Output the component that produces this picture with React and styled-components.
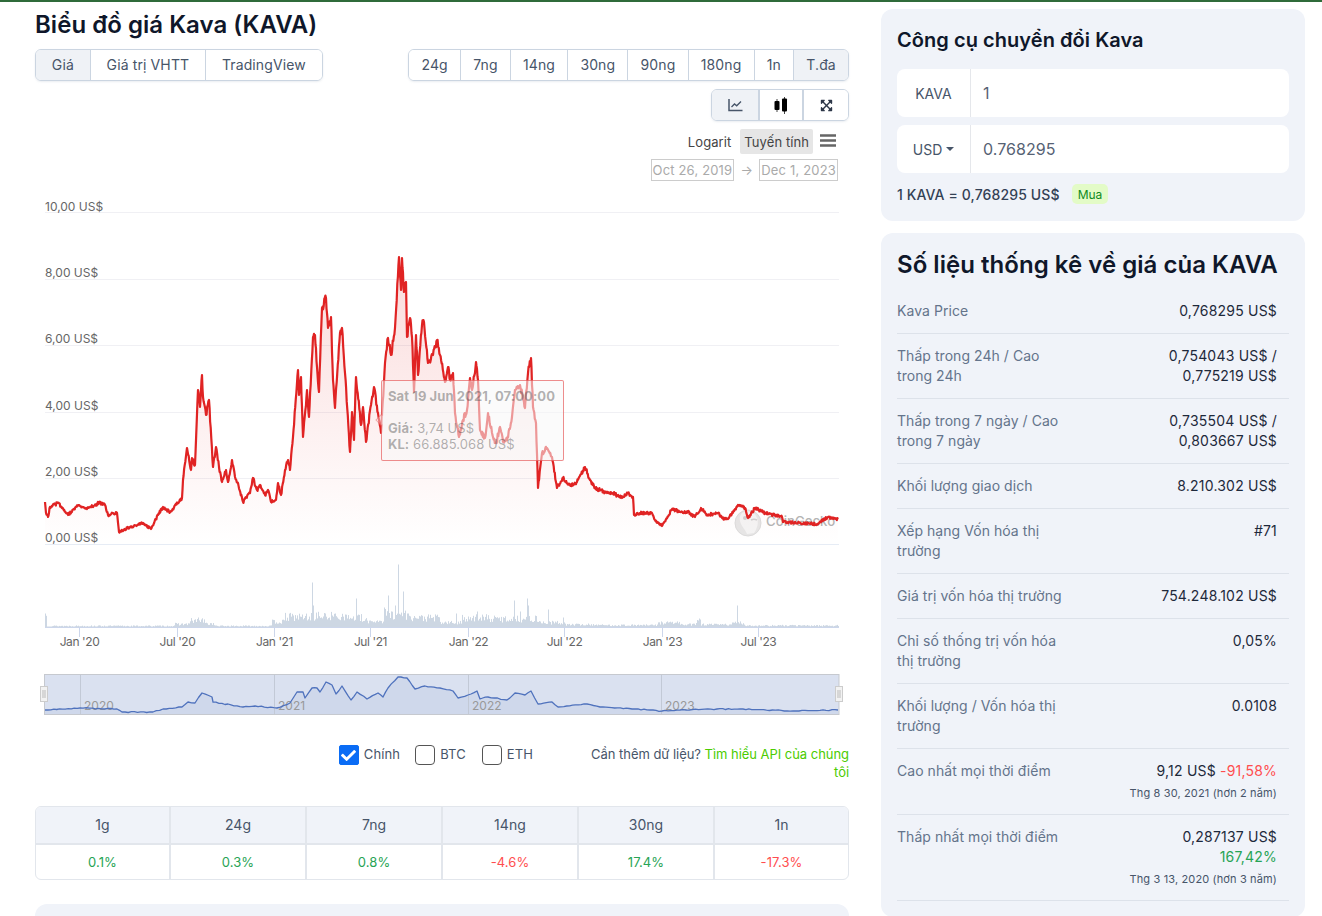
import React from 'react';
import styled, { createGlobalStyle } from 'styled-components';
import { FaExpandArrowsAlt, FaCheck } from 'react-icons/fa';

const GlobalStyle = createGlobalStyle`
  html, body { margin: 0; padding: 0; height: 916px; overflow: hidden; background: #fff; }
  body { font-family: Inter, "Noto Sans", "Liberation Sans", sans-serif; color: #1e293b; letter-spacing: 0.05px; }
  * { box-sizing: border-box; }
`;

const priceKeys = [
  [45,502],[46,513],[48,517],[50,507],[58,503],[68,515],[78,505],[87,509],[99,503],[105,505],[108,515],[117,513],[119,532],[130,527],[143,523],[151,529],[158,515],[163,507],[170,512],[182,498],[183,480],
  [187,448],[191,470],[192,458],[195,465],[198,390],[200,407],[202,375],[203,397],[206,415],[209,400],[213,467],[216,447],[219,467],[222,482],[226,470],[228,482],[232,460],[235,477],[238,483],[243,502],[250,493],[253,478],[257,490],[260,485],[265,495],[268,490],[271,502],[276,500],[278,483],[281,495],[285,470],[288,460],[290,470],[293,437],[298,370],[299,395],[301,377],[303,437],[307,390],[309,417],[313,337],[315,335],[317,367],[319,392],[322,308],[326,298],[328,328],[331,317],[333,380],[335,408],[340,333],[342,328],[345,373],[350,452],[352,412],[354,440],[356,377],[361,425],[363,407],[366,442],[371,405],[374,387],[378,413],
  [381,433],[385,363],[388,338],[391,355],[395,328],[399,257],[401,290],[402,258],[404,292],[406,282],[407,337],[410,318],[412,337],[414,392],[416,335],[418,375],[422,325],[424,322],[428,363],[433,355],[437,340],[440,355],[445,382],[448,367],[450,380],[453,373],[455,413],[459,437],[463,420],[467,410],[470,378],[472,390],[476,362],[478,380],[480,430],[485,438],[488,413],[493,437],[496,443],[500,427],[503,442],[507,440],[512,417],[515,390],[520,385],[525,408],[528,373],[531,358],[533,407],[536,423],[538,488],[542,453],[547,448],[552,457],[557,488],[563,478],[570,485],[577,482],[585,467],[590,480],
  [595,488],[607,493],[613,493],[622,498],[628,493],[633,497],[634,515],[640,513],[652,513],[655,520],[662,526],[672,509],[683,513],[688,512],[695,517],[701,508],[707,515],[718,513],[722,518],[728,519],[738,505],[745,508],[748,518],[755,508],[765,513],[782,517],[783,522],[800,523],[817,524],[828,517],[838,519]
];

const navKeys = [
  [45,710],[80,708],[117,709],[122,712],[153,712],[163,709],[182,707],[188,702],[195,703],[202,693],[212,697],[213,702],[243,707],[255,706],[277,708],[290,703],[297,692],[303,692],[305,698],[312,688],[317,688],[320,692],[326,682],[332,685],[336,694],[342,686],[351,700],[357,692],[367,699],[378,693],[383,697],[388,688],[398,677],[407,678],[415,689],[425,686],[440,688],[453,691],[458,698],[468,695],[477,691],[480,699],[488,697],[507,700],[515,693],[525,695],[531,691],[538,704],[552,702],[558,707],[587,704],[600,707],[635,709],[662,711],[680,710],[717,709],[740,709],[793,711],[838,710]
];

const volumeBands = [
  [45,47,14],[47,175,1.6],[175,190,3.5],[190,205,7],[205,215,4],[215,272,1.6],[272,285,6],[285,312,11],[312,345,12],[345,362,10],[362,384,7],[384,412,14],[412,440,10],[440,462,5],[462,490,10],[490,540,9],[540,565,5],[565,600,3],[600,658,2.4],[658,680,5],[680,696,3],[696,701,7],[701,730,3],[730,745,4.5],[745,839,2]
];
const volumeSpikes = [
  [312,45],[313,22],[398,63],[388,32],[356,29],[403,36],[395,22],[384,20],[514,27],[527,29],[528,22],[737,22],[548,18],[520,16],[477,16],[468,11],[563,10],[698,7],[293,12],[325,14],[332,12],[198,10],[408,14],[456,14],[480,10],[345,13]
];

function seeded(seed) {
  let a = seed;
  return () => {
    a = (a + 0x6d2b79f5) | 0;
    let t = Math.imul(a ^ (a >>> 15), 1 | a);
    t = (t + Math.imul(t ^ (t >>> 7), 61 | t)) ^ t;
    return ((t ^ (t >>> 14)) >>> 0) / 4294967296;
  };
}

function buildLine(keys, seed, stepSize, ampOf) {
  const rnd = seeded(seed);
  let d = '';
  keys.forEach(([x, y], i) => {
    if (i === 0) { d += `M${x} ${y}`; return; }
    const [px, py] = keys[i - 1];
    const steps = Math.max(1, Math.round((x - px) / stepSize));
    for (let s = 1; s <= steps; s++) {
      const t = s / steps;
      const yy = py + (y - py) * t;
      const amp = s === steps ? 0 : ampOf(yy);
      d += `L${(px + (x - px) * t).toFixed(1)} ${(yy + (rnd() - 0.5) * 2 * amp).toFixed(1)}`;
    }
  });
  return d;
}

function buildVolume() {
  const rnd = seeded(13);
  let d = '';
  for (let x = 45; x < 839; x++) {
    const band = volumeBands.find(b => x >= b[0] && x < b[1]);
    const base = band ? band[2] : 2;
    let h = base * (0.55 + rnd() * 0.8);
    const spike = volumeSpikes.find(s => s[0] === x);
    if (spike) h = spike[1];
    d += `M${x + 0.5} 627.5V${(627.5 - Math.max(1, h)).toFixed(1)}`;
  }
  return d;
}

const pricePath = buildLine(priceKeys, 77, 0.55, y => Math.min(5, 1 + (544 - y) / 70));
const volumePath = buildVolume();
const navPath = buildLine(navKeys, 5, 3, () => 0.5);

const Page = styled.div`
  width: 1322px;
  height: 916px;
  overflow: hidden;
  border-top: 2px solid #2f6b3a;
  display: flex;
  align-items: flex-start;
  gap: 32px;
  padding: 0 17px 0 35px;
`;
const LeftColumn = styled.main`
  width: 814px;
  flex: none;
`;
const RightColumn = styled.aside`
  width: 424px;
  flex: none;
  padding-top: 7px;
  display: flex;
  flex-direction: column;
  gap: 12px;
`;
const Title = styled.h1`
  margin: 7px 0 0;
  font-size: 24px;
  line-height: 32px;
  font-weight: 600;
  letter-spacing: 0.03px;
  color: #0f172a;
`;
const Toolbar = styled.div`
  margin-top: 8px;
  display: flex;
  justify-content: space-between;
`;
const ButtonGroup = styled.div`
  display: flex;
  height: 32px;
  border: 1px solid #cbd5e1;
  border-radius: 6px;
  overflow: hidden;
  box-shadow: 0 1px 2px rgba(148, 163, 184, 0.2);
`;
const GroupButton = styled.div`
  display: flex;
  align-items: center;
  justify-content: center;
  padding: 0 ${p => p.$pad}px 1px;
  font-size: 14px;
  letter-spacing: 0.12px;
  color: #475569;
  background: ${p => (p.$active ? '#eff2f6' : '#fff')};
  & + & { border-left: 1px solid #cbd5e1; }
`;
const IconRow = styled.div`
  margin-top: 8px;
  display: flex;
  justify-content: flex-end;
`;
const IconButton = styled.div`
  width: ${p => p.$w}px;
  display: flex;
  align-items: center;
  justify-content: center;
  background: ${p => (p.$active ? '#eff2f6' : '#fff')};
  color: ${p => p.$color || '#475569'};
  & + & { border-left: 2px solid #cbd5e1; }
`;
const ScaleRow = styled.div`
  margin-top: 8px;
  height: 25px;
  padding-right: 13px;
  display: flex;
  justify-content: flex-end;
  align-items: center;
  font-size: 13px;
  letter-spacing: 0.08px;
  color: #444;
`;
const ScaleOption = styled.span`
  height: 25px;
  display: flex;
  align-items: center;
  padding: 0 4px;
  margin-left: 5px;
  background: ${p => (p.$active ? '#e6e6e6' : 'transparent')};
  border-radius: 2px;
`;
const MenuIcon = styled.svg`
  margin-left: 7px;
  margin-bottom: 3px;
`;
const DateRow = styled.div`
  margin-top: 5px;
  height: 22px;
  padding-right: 11px;
  display: flex;
  justify-content: flex-end;
  align-items: center;
  font-size: 13px;
  letter-spacing: 0.17px;
  color: #aaa;
`;
const DateBox = styled.span`
  height: 22px;
  display: flex;
  align-items: center;
  padding: 0 1px;
  border: 1px solid #ccc;
`;
const DateArrow = styled.span`
  width: 25px;
  text-align: center;
  font-size: 13px;
  color: #aaa;
`;
const ChartWrap = styled.div`
  position: relative;
  margin-top: 9px;
  height: 540px;
`;
const ChartSvg = styled.svg`
  display: block;
`;
const AxisText = styled.text`
  font-family: Inter, sans-serif;
  font-size: 12px;
  letter-spacing: ${p => (p.$tight ? '-0.4px' : '0')};
  fill: #666;
`;
const NavYear = styled.text`
  font-family: Inter, sans-serif;
  font-size: 12px;
  letter-spacing: 0;
  fill: #999;
`;
const Watermark = styled.text`
  font-family: Inter, sans-serif;
  font-size: 13.2px;
  font-weight: 500;
  letter-spacing: 0;
  fill: #b4b4b4;
`;
const Tooltip = styled.div`
  position: absolute;
  left: 346px;
  top: 190px;
  width: 183px;
  height: 81px;
  padding: 7px 6px;
  background: rgba(247, 247, 247, 0.55);
  border: 1px solid rgba(224, 32, 32, 0.5);
  border-radius: 2px;
  font-size: 13px;
  line-height: 16px;
  letter-spacing: 0.08px;
  color: rgba(70, 70, 70, 0.42);
`;
const TooltipPointer = styled.span`
  position: absolute;
  left: -5px;
  top: 35px;
  width: 8px;
  height: 8px;
  transform: rotate(45deg);
  border-left: 1px solid rgba(224, 32, 32, 0.35);
  border-bottom: 1px solid rgba(224, 32, 32, 0.35);
  background: rgba(247, 247, 247, 0.4);
`;
const TooltipHead = styled.div`
  font-weight: 700;
  margin-bottom: 16px;
`;
const TooltipLine = styled.div`
  white-space: nowrap;
  & b { font-weight: 700; }
`;
const LegendRow = styled.div`
  margin-top: 15px;
  height: 43px;
  display: flex;
  justify-content: flex-end;
  align-items: flex-start;
  font-size: 13px;
  color: #475569;
`;
const CheckGroup = styled.div`
  display: flex;
  align-items: center;
  gap: 5px;
  margin-right: ${p => p.$mr || 15}px;
  height: 20px;
`;
const CheckText = styled.span`
  padding-bottom: 2px;
  letter-spacing: 0.12px;
`;
const CheckBox = styled.span`
  width: 20px;
  height: 20px;
  display: flex;
  align-items: center;
  justify-content: center;
  border-radius: ${p => (p.$on ? '2px' : '4px')};
  background: ${p => (p.$on ? '#0a6cf5' : '#fff')};
  border: 1px solid ${p => (p.$on ? '#0a6cf5' : '#555')};
  color: #fff;
`;
const ApiNote = styled.div`
  width: 260px;
  margin-left: 41px;
  text-align: right;
  line-height: 18px;
  letter-spacing: -0.04px;
  color: #475569;
`;
const ApiLink = styled.span`
  color: #4bcc00;
`;
const ChangeTable = styled.div`
  margin-top: 18px;
  display: grid;
  grid-template-columns: 135px repeat(4, 136px) 1fr;
  border: 1px solid #e2e6ec;
  border-radius: 6px;
  overflow: hidden;
`;
const ChangeHead = styled.div`
  height: 38px;
  padding-bottom: 1px;
  display: flex;
  align-items: center;
  justify-content: center;
  background: #f0f3f9;
  border-bottom: 2px solid #e2e6ec;
  border-right: ${p => (p.$last ? '0' : '2px solid #e2e6ec')};
  font-size: 14px;
  color: #475569;
`;
const ChangeCell = styled.div`
  height: 34px;
  padding-bottom: 1px;
  display: flex;
  align-items: center;
  justify-content: center;
  border-right: ${p => (p.$last ? '0' : '2px solid #e2e6ec')};
  font-size: 13px;
  letter-spacing: 0.1px;
  color: ${p => (p.$up ? '#27a455' : '#ff4d4f')};
`;
const BottomCard = styled.div`
  margin-top: 24px;
  height: 60px;
  background: #f0f3f9;
  border-radius: 12px;
`;
const SideCard = styled.section`
  background: #f0f3f9;
  border-radius: 12px;
  padding: 16px;
`;
const ConverterTitle = styled.h2`
  margin: 1px 0 0;
  font-size: 20px;
  line-height: 28px;
  font-weight: 600;
  letter-spacing: 0.05px;
  color: #0f172a;
`;
const ConvertRow = styled.div`
  margin-top: ${p => p.$mt}px;
  height: 48px;
  display: flex;
  background: #fff;
  border-radius: 8px;
`;
const ConvertUnit = styled.div`
  width: 74px;
  flex: none;
  display: flex;
  align-items: center;
  justify-content: center;
  gap: 4px;
  font-size: 14px;
  color: #475569;
  border-right: 1px solid #e5e7eb;
`;
const Caret = styled.span`
  width: 0;
  height: 0;
  border-left: 4px solid transparent;
  border-right: 4px solid transparent;
  border-top: 4px solid #475569;
`;
const ConvertValue = styled.div`
  display: flex;
  align-items: center;
  padding-left: 12px;
  font-size: 16px;
  color: #566274;
`;
const RateLine = styled.div`
  margin: 11px 0 1px;
  height: 20px;
  display: flex;
  align-items: center;
  font-size: 14px;
  font-weight: 500;
  letter-spacing: 0.12px;
  color: #334155;
`;
const BuyBadge = styled.span`
  margin-left: 12px;
  height: 20px;
  padding: 0 6px;
  display: flex;
  align-items: center;
  background: #e3fbc7;
  border-radius: 5px;
  font-size: 12px;
  font-weight: 400;
  letter-spacing: 0;
  color: #0f8a1f;
`;
const StatsTitle = styled.h2`
  margin: 0 0 8px;
  font-size: 24px;
  line-height: 32px;
  font-weight: 600;
  letter-spacing: 0.03px;
  color: #0f172a;
`;
const StatRow = styled.div`
  display: grid;
  grid-template-columns: 196px 196px;
  padding: 12px 0;
  border-bottom: 1px solid #dde2ea;
  font-size: 14px;
  line-height: 20px;
`;
const StatLabel = styled.div`
  color: #64748b;
  padding-right: 24px;
`;
const StatValue = styled.div`
  padding: 0 12px 0 24px;
  text-align: right;
  letter-spacing: 0.2px;
  color: #1e293b;
`;
const Pct = styled.span`
  color: ${p => (p.$up ? '#27a455' : '#ff4d4f')};
`;
const StatSub = styled.div`
  margin: 3px -4px 0 -20px;
  font-size: 11px;
  line-height: 18px;
  letter-spacing: 0.14px;
  color: #475569;
  padding-right: 4px;
`;

const yLabels = [['10,00 US$', 211], ['8,00 US$', 277], ['6,00 US$', 343], ['4,00 US$', 410], ['2,00 US$', 476], ['0,00 US$', 542]];
const gridY = [212.5, 279.5, 345.5, 412.5, 478.5];
const xLabels = [["Jan '20", 79], ["Jul '20", 177], ["Jan '21", 274], ["Jul '21", 370], ["Jan '22", 468], ["Jul '22", 564], ["Jan '23", 662], ["Jul '23", 758]];
const navYears = [['2020', 80], ['2021', 274], ['2022', 468], ['2023', 661]];
const tabs = [['Giá', true], ['Giá trị VHTT', false], ['TradingView', false]];
const ranges = ['24g', '7ng', '14ng', '30ng', '90ng', '180ng', '1n', 'T.đa'];
const changes = [['1g', '0.1%', true], ['24g', '0.3%', true], ['7ng', '0.8%', true], ['14ng', '-4.6%', false], ['30ng', '17.4%', true], ['1n', '-17.3%', false]];
const stats = [
  ['Kava Price', '0,768295 US$'],
  ['Thấp trong 24h / Cao trong 24h', '0,754043 US$ / 0,775219 US$'],
  ['Thấp trong 7 ngày / Cao trong 7 ngày', '0,735504 US$ / 0,803667 US$'],
  ['Khối lượng giao dịch', '8.210.302 US$'],
  ['Xếp hạng Vốn hóa thị trường', '#71'],
  ['Giá trị vốn hóa thị trường', '754.248.102 US$'],
  ['Chỉ số thống trị vốn hóa thị trường', '0,05%'],
  ['Khối lượng / Vốn hóa thị trường', '0.0108'],
];

function LineIcon() {
  return (
    <svg width="15" height="14" viewBox="0 0 15 14" fill="none" stroke="currentColor">
      <path d="M1 1v11.5h13.5" strokeWidth="1.5" />
      <path d="M3.5 9l3-3 2.2 1.8 4.3-4.3" strokeWidth="1.3" />
    </svg>
  );
}

function CandleIcon() {
  return (
    <svg width="14" height="17" viewBox="0 0 14 17">
      <path d="M3 2v13M10.5 0v17" stroke="#444" strokeWidth="1" />
      <rect x="0.5" y="4" width="5" height="9" rx="1" fill="#000" />
      <rect x="8" y="1.5" width="5" height="13" rx="1" fill="#000" />
    </svg>
  );
}

function GeckoMark() {
  return (
    <g>
      <circle cx="748" cy="523" r="13" fill="#e6e6e6" stroke="#dcdcdc" strokeWidth="1" />
      <path d="M742 513c6-3 13-1 15 5 2 5 0 11-3 15l-7 1c-2-5-6-8-7-13-1-3 0-6 2-8z" fill="#f4f4f4" />
      <circle cx="745" cy="518" r="2" fill="#cfcfcf" />
      <path d="M751 520c2-1 4-1 6 0" stroke="#d0d0d0" strokeWidth="1.5" fill="none" />
    </g>
  );
}

function PriceChart() {
  return (
    <ChartSvg width="814" height="540" viewBox="35 190 814 540">
      <defs>
        <linearGradient id="priceFill" gradientUnits="userSpaceOnUse" x1="0" y1="257" x2="0" y2="544">
          <stop offset="0" stopColor="#e02020" stopOpacity="0.16" />
          <stop offset="1" stopColor="#e02020" stopOpacity="0" />
        </linearGradient>
      </defs>
      {gridY.map(y => <line key={y} x1="45" x2="839" y1={y} y2={y} stroke="#f0f0f4" />)}
      <line x1="45" x2="839" y1="544.5" y2="544.5" stroke="#e6ecf5" />
      {yLabels.map(([t, y]) => <AxisText key={t} x="45" y={y}>{t}</AxisText>)}
      <GeckoMark />
      <Watermark x="766" y="526">CoinGecko</Watermark>
      <path d={`${pricePath}L838 544L45 544Z`} fill="url(#priceFill)" />
      <path d={pricePath} fill="none" stroke="#e02323" strokeWidth="2.2" strokeLinejoin="round" />
      <path d={volumePath} stroke="#cdd7e3" strokeWidth="1" fill="none" />
      <line x1="45" x2="839" y1="627.5" y2="627.5" stroke="#ccd6eb" />
      {xLabels.map(([t, x]) => (
        <g key={t}>
          <line x1={x + 0.5} x2={x + 0.5} y1="628" y2="637" stroke="#ccd6eb" />
          <AxisText $tight x={x + 0.5} y="646" textAnchor="middle">{t}</AxisText>
        </g>
      ))}
      <rect x="44.5" y="674.5" width="794.5" height="40" fill="#dae1f0" />
      <path d={`${navPath}L838 714L45 714Z`} fill="#cfd8eb" />
      {navYears.map(([t, x]) => (
        <g key={t}>
          <line x1={x + 0.5} x2={x + 0.5} y1="675" y2="714" stroke="#c2c9d6" />
          <NavYear x={x + 4} y="710">{t}</NavYear>
        </g>
      ))}
      <path d={navPath} fill="none" stroke="#4f72bd" strokeWidth="1.3" strokeLinejoin="round" />
      <rect x="44.5" y="674.5" width="794.5" height="40" fill="none" stroke="#c6c9cf" />
      {[40.5, 835.5].map(x => (
        <g key={x}>
          <rect x={x} y="686.5" width="7" height="15" fill="#f2f2f2" stroke="#ccc" />
          <path d={`M${x + 2.5} 690v8M${x + 4.5} 690v8`} stroke="#bbb" strokeWidth="1" />
        </g>
      ))}
    </ChartSvg>
  );
}

export default function App() {
  return (
    <>
      <GlobalStyle />
      <Page>
        <LeftColumn>
          <Title>Biểu đồ giá Kava (KAVA)</Title>
          <Toolbar>
            <ButtonGroup>
              {tabs.map(([t, on]) => <GroupButton key={t} $pad={15.85} $active={on}>{t}</GroupButton>)}
            </ButtonGroup>
            <ButtonGroup>
              {ranges.map(t => <GroupButton key={t} $pad={12.18} $active={t === 'T.đa'}>{t}</GroupButton>)}
            </ButtonGroup>
          </Toolbar>
          <IconRow>
            <ButtonGroup>
              <IconButton $w={46} $active><LineIcon /></IconButton>
              <IconButton $w={44}><CandleIcon /></IconButton>
              <IconButton $w={46} $color="#2d3748"><FaExpandArrowsAlt size={13} /></IconButton>
            </ButtonGroup>
          </IconRow>
          <ScaleRow>
            <ScaleOption>Logarit</ScaleOption>
            <ScaleOption $active>Tuyến tính</ScaleOption>
            <MenuIcon width="16" height="13" viewBox="0 0 16 13">
              <path d="M0 1.5h16M0 6.5h16M0 11.5h16" stroke="#666" strokeWidth="2.6" />
            </MenuIcon>
          </ScaleRow>
          <DateRow>
            <DateBox>Oct 26, 2019</DateBox>
            <DateArrow>→</DateArrow>
            <DateBox>Dec 1, 2023</DateBox>
          </DateRow>
          <ChartWrap>
            <PriceChart />
            <Tooltip>
              <TooltipPointer />
              <TooltipHead>Sat 19 Jun 2021, 07:00:00</TooltipHead>
              <TooltipLine><b>Giá:</b> 3,74 US$</TooltipLine>
              <TooltipLine><b>KL:</b> 66.885.068 US$</TooltipLine>
            </Tooltip>
          </ChartWrap>
          <LegendRow>
            <CheckGroup><CheckBox $on><FaCheck size={15} /></CheckBox><CheckText>Chính</CheckText></CheckGroup>
            <CheckGroup $mr={16}><CheckBox /><CheckText>BTC</CheckText></CheckGroup>
            <CheckGroup><CheckBox /><CheckText>ETH</CheckText></CheckGroup>
            <ApiNote>Cần thêm dữ liệu? <ApiLink>Tìm hiểu API của chúng tôi</ApiLink></ApiNote>
          </LegendRow>
          <ChangeTable>
            {changes.map(([h], i) => <ChangeHead key={h} $last={i === 5}>{h}</ChangeHead>)}
            {changes.map(([h, v, up], i) => <ChangeCell key={h} $last={i === 5} $up={up}>{v}</ChangeCell>)}
          </ChangeTable>
          <BottomCard />
        </LeftColumn>
        <RightColumn>
          <SideCard>
            <ConverterTitle>Công cụ chuyển đổi Kava</ConverterTitle>
            <ConvertRow $mt={15}>
              <ConvertUnit>KAVA</ConvertUnit>
              <ConvertValue>1</ConvertValue>
            </ConvertRow>
            <ConvertRow $mt={8}>
              <ConvertUnit>USD <Caret /></ConvertUnit>
              <ConvertValue>0.768295</ConvertValue>
            </ConvertRow>
            <RateLine>1 KAVA = 0,768295 US$<BuyBadge>Mua</BuyBadge></RateLine>
          </SideCard>
          <SideCard>
            <StatsTitle>Số liệu thống kê về giá của KAVA</StatsTitle>
            {stats.map(([l, v]) => (
              <StatRow key={l}>
                <StatLabel>{l}</StatLabel>
                <StatValue>{v}</StatValue>
              </StatRow>
            ))}
            <StatRow>
              <StatLabel>Cao nhất mọi thời điểm</StatLabel>
              <StatValue>
                9,12 US$ <Pct>-91,58%</Pct>
                <StatSub>Thg 8 30, 2021 (hơn 2 năm)</StatSub>
              </StatValue>
            </StatRow>
            <StatRow>
              <StatLabel>Thấp nhất mọi thời điểm</StatLabel>
              <StatValue>
                0,287137 US$
                <div><Pct $up>167,42%</Pct></div>
                <StatSub>Thg 3 13, 2020 (hơn 3 năm)</StatSub>
              </StatValue>
            </StatRow>
          </SideCard>
        </RightColumn>
      </Page>
    </>
  );
}
